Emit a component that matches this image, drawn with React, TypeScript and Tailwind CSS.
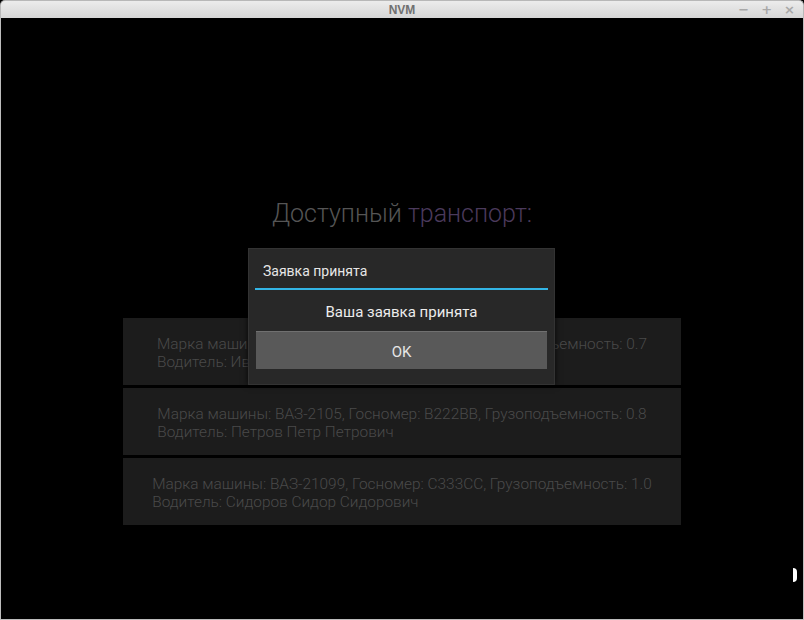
const cars = [
  {
    line1: 'Марка машины: ВАЗ-2106, Госномер: А111АА, Грузоподъемность: 0.7',
    line2: 'Водитель: Иванов Иван Иванович',
  },
  {
    line1: 'Марка машины: ВАЗ-2105, Госномер: В222ВВ, Грузоподъемность: 0.8',
    line2: 'Водитель: Петров Петр Петрович',
  },
  {
    line1: 'Марка машины: ВАЗ-21099, Госномер: С333СС, Грузоподъемность: 1.0',
    line2: 'Водитель: Сидоров Сидор Сидорович',
  },
];

export default function App() {
  return (
    <div className="w-[804px] h-[620px] flex flex-col bg-black font-['Roboto',sans-serif] overflow-hidden">
      {/* window title bar */}
      <div className="h-[18px] shrink-0 relative flex items-center justify-center rounded-t-[5px] bg-gradient-to-b from-[#ececec] to-[#d6d6d6] border border-b-0 border-[#b8b8b8]">
        <span className="text-[12px] font-bold text-[#707070] font-['Liberation_Sans',sans-serif] leading-none">NVM</span>
        <div className="absolute right-[8px] top-0 h-full flex items-center gap-[12px] text-[#a8a8a8] text-[13px] font-bold font-['DejaVu_Sans',sans-serif] leading-none">
          <span>−</span>
          <span>+</span>
          <span>×</span>
        </div>
      </div>

      {/* content */}
      <div className="flex-1 relative bg-black border-x border-b border-[#bdbdbd] flex flex-col items-center pt-[180px]">
        <h1 className="text-[25px] leading-[32px] text-[#555555] font-light">
          Доступный <span className="text-[#4b3a5c]">транспорт:</span>
        </h1>

        <div className="mt-[88px] w-[558px] flex flex-col gap-[3px]">
          {cars.map((c) => (
            <div key={c.line2} className="h-[67px] bg-[#1c1c1c] flex items-center justify-center pt-[3px]">
              <div className="text-[15.4px] leading-[18px] text-[#4a4a4a] font-light">
                <div>{c.line1}</div>
                <div>{c.line2}</div>
              </div>
            </div>
          ))}
        </div>

        {/* dialog */}
        <div className="absolute left-[247px] top-[230px] w-[307px] h-[137px] bg-[#282828] border border-[#333] shadow-[0_0_6px_rgba(0,0,0,0.8)] flex flex-col px-[6px]">
          <div className="h-[41px] shrink-0 flex items-center px-[8px] border-b-2 border-[#33b5e5] text-[14px] text-[#e6e6e6] pt-[5px]">
            Заявка принята
          </div>
          <div className="h-[41px] flex items-center justify-center text-[15px] text-[#ececec] pt-[3px]">
            Ваша заявка принята
          </div>
          <button className="h-[38px] mx-[1px] bg-[#595959] border-t border-[#707070] text-[15px] text-[#e6e6e6] flex items-center justify-center pt-[3px]">
            OK
          </button>
        </div>

        {/* small handle at right edge */}
        <div className="absolute right-[6px] top-[550px] w-[4px] h-[14px] bg-white rounded-r-full" />
      </div>
    </div>
  );
}
